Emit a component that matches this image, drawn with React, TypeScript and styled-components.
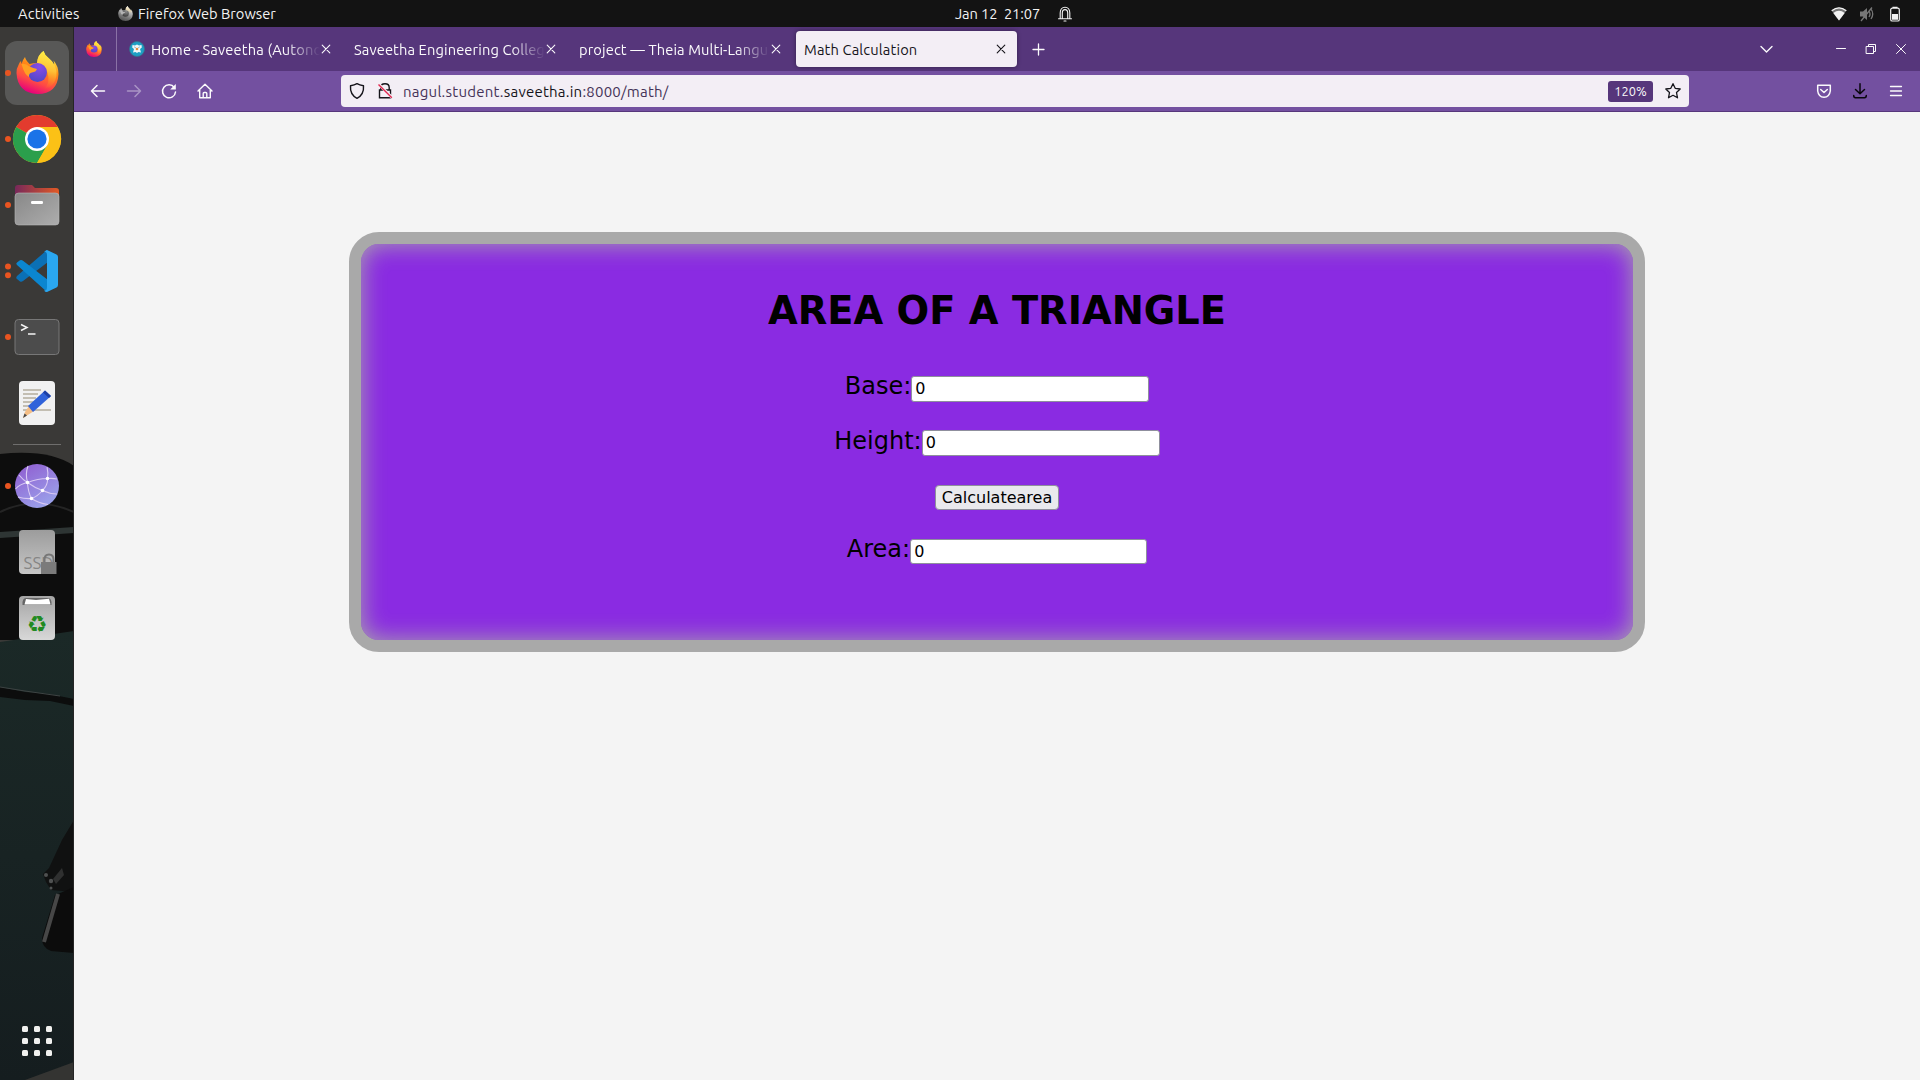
import React from 'react';
import styled, { createGlobalStyle } from 'styled-components';

const Global = createGlobalStyle`
  *, *::before, *::after { box-sizing: border-box; }
  html, body { margin: 0; padding: 0; overflow: hidden; background: #f4f4f4; }
  svg { display: block; flex: none; }
`;

const uiFont = `Ubuntu, "Noto Sans", "Open Sans", sans-serif`;

const Desktop = styled.div`
  width: 1920px;
  height: 1080px;
  display: grid;
  grid-template: 27px 1053px / 74px 1846px;
  font-family: ${uiFont};
  font-size: 14.67px;
  overflow: hidden;
`;

const TopBar = styled.header`
  grid-column: 1 / 3;
  display: grid;
  grid-template-columns: 955px 1fr auto;
  align-items: center;
  background: #131313;
  color: #f2f2f2;
`;

const BarGroup = styled.div<{ $gap?: number; $left?: number; $right?: number }>`
  display: flex;
  align-items: center;
  height: 27px;
  gap: ${(p) => p.$gap ?? 0}px;
  padding-left: ${(p) => p.$left ?? 0}px;
  padding-right: ${(p) => p.$right ?? 0}px;
`;

const Text = styled.span<{ $ls?: number; $w?: number }>`
  white-space: pre;
  line-height: 20px;
  letter-spacing: ${(p) => p.$ls ?? 0}px;
  width: ${(p) => (p.$w ? `${p.$w}px` : 'auto')};
`;

const Dock = styled.nav`
  position: relative;
  display: flex;
  flex-direction: column;
  padding-top: 13px;
  background: #3a3937;
  overflow: hidden;
`;

const Wallpaper = styled.svg`
  position: absolute;
  left: 0;
  top: 0;
`;

const DockItem = styled.div`
  position: relative;
  height: 66px;
  width: 74px;
  flex: none;
`;

const DockRule = styled.hr`
  position: relative;
  flex: none;
  width: 48px;
  height: 1px;
  margin: 8px 13px;
  border: 0;
  background: #6f6e6d;
`;

const AppsGrid = styled.div`
  position: relative;
  display: grid;
  grid-template-columns: repeat(3, 6px);
  gap: 6px;
  margin: auto 0 24px 22px;
`;

const AppsDot = styled.i`
  width: 6px;
  height: 6px;
  border-radius: 1.5px;
  background: #f1f1ef;
`;

const Browser = styled.main`
  display: flex;
  flex-direction: column;
  background: #f4f4f4;
`;

const TabStrip = styled.div`
  display: flex;
  align-items: center;
  height: 44px;
  background: #56367b;
  color: #fbfafc;
`;

const PinnedTab = styled.div`
  width: 43px;
  height: 44px;
  padding: 14px 0 0 12px;
  margin-right: 4px;
  border-right: 1px solid #8a72a6;
`;

const Tab = styled.div<{ $active?: boolean }>`
  display: flex;
  align-items: center;
  width: ${(p) => (p.$active ? 221 : 225)}px;
  height: 36px;
  padding: 0 ${(p) => (p.$active ? 10 : 14)}px 0 8px;
  border-radius: 4px;
  background: ${(p) => (p.$active ? '#f3eef5' : 'transparent')};
  color: ${(p) => (p.$active ? '#15141a' : 'inherit')};
  box-shadow: ${(p) => (p.$active ? '0 0 4px rgba(0,0,0,.4)' : 'none')};
`;

const TabTitle = styled.span<{ $ls: number; $fade?: boolean }>`
  flex: 1;
  min-width: 0;
  white-space: pre;
  line-height: 22px;
  padding-top: 1px;
  letter-spacing: ${(p) => p.$ls}px;
  mask-image: ${(p) => (p.$fade ? 'linear-gradient(to left, transparent, #000 34px)' : 'none')};
`;

const TabIcon = styled.span`
  margin-right: 6px;
`;

const NewTab = styled.div`
  margin-left: 15px;
`;

const WindowControls = styled.div`
  display: flex;
  align-items: center;
  margin-left: auto;
  padding-right: 13px;
`;

const NavBar = styled.div`
  display: flex;
  align-items: center;
  height: 41px;
  padding: 0 14px 0 14px;
  border-bottom: 1px solid #56367b;
  background: #7350a0;
  color: #fbfafc;
`;

const NavButtons = styled.div`
  display: flex;
  gap: 15.7px;
  width: 253px;
`;

const UrlBar = styled.div`
  display: flex;
  align-items: center;
  width: 1348px;
  height: 32px;
  padding: 0 6px;
  border-radius: 4px;
  background: #f3eef5;
  color: #15141a;
`;

const Url = styled.span`
  flex: 1;
  white-space: pre;
  font-size: 15px;
  letter-spacing: 0.23px;
  color: #453358;
  b { font-weight: 400; color: #15141a; }
`;

const ZoomBadge = styled.span`
  width: 45px;
  height: 21px;
  margin-right: 10px;
  border-radius: 3px;
  background: #56367b;
  color: #fbfafc;
  font-size: 12.8px;
  line-height: 21px;
  text-align: center;
`;

const NavRight = styled.div`
  display: flex;
  gap: 16px;
  margin-left: auto;
`;

const Card = styled.section`
  width: 1296px;
  height: 420px;
  margin: 120px 0 0 275px;
  padding-top: 41px;
  border: 12px solid #a9a9a9;
  border-radius: 30px;
  background: #8a2be2;
  box-shadow: inset 0 0 24px #a9a9a9;
  color: #000;
  font-family: "DejaVu Sans", sans-serif;
`;

const Title = styled.h1`
  margin: 0;
  height: 91px;
  text-align: center;
  font-size: 38.4px;
  line-height: 52px;
  white-space: nowrap;
`;

const Row = styled.div<{ $gap: number }>`
  display: flex;
  justify-content: center;
  height: 26px;
  margin-bottom: ${(p) => p.$gap}px;
`;

const Label = styled.label<{ $up?: number }>`
  margin-top: -${(p) => p.$up ?? 3}px;
  font-size: 24px;
  line-height: 26px;
`;

const Field = styled.input<{ $small?: boolean }>`
  width: ${(p) => (p.$small ? 237 : 238)}px;
  height: ${(p) => (p.$small ? 25 : 26)}px;
  padding: 0 3px 1px;
  border: 1px solid #8f8f9d;
  border-radius: 3px;
  background: #fff;
  color: #000;
  font: 16px "DejaVu Sans", sans-serif;
  outline: none;
`;

const Submit = styled.button`
  width: 124px;
  height: 25px;
  padding: 0;
  border: 1px solid #8f8f9d;
  border-radius: 4px;
  background: #e9e9ed;
  color: #000;
  font: 16px/22px "DejaVu Sans", sans-serif;
`;

const Firefox = ({ size, id, gray }: { size: number; id: string; gray?: boolean }) => {
  const c = gray
    ? ['#f4f4f4', '#b5b5b5', '#777', '#555', '#8a8a8a', '#3c3c3c']
    : ['#fff044', '#ff8a16', '#ff4a45', '#e5007d', '#8a4be8', '#5148c8'];
  return (
    <svg width={size} height={size} viewBox="0 0 42 43">
      <defs>
        <linearGradient id={id + 'a'} x1=".75" y1=".1" x2=".4" y2="1">
          <stop offset="0" stopColor={c[0]} />
          <stop offset=".35" stopColor={c[1]} />
          <stop offset=".7" stopColor={c[2]} />
          <stop offset="1" stopColor={c[3]} />
        </linearGradient>
        <linearGradient id={id + 'b'} x1=".5" y1="0" x2=".4" y2="1">
          <stop offset="0" stopColor={c[0]} />
          <stop offset=".5" stopColor="#ffc53a" stopOpacity={gray ? 0 : 0.9} />
          <stop offset="1" stopColor={c[1]} stopOpacity="0" />
        </linearGradient>
        <radialGradient id={id + 'c'} cx=".6" cy=".2" r=".8">
          <stop offset="0" stopColor={c[4]} />
          <stop offset="1" stopColor={c[5]} />
        </radialGradient>
      </defs>
      <path d="M2 14 Q3 11 4.500 10 L5 13 Q6 9 8.500 6 Q9 9 13 13 Q17 12 20.500 12 Q21 4 27 0 Q28 4 32 7 Q36 10 37.500 14 Q38 12 37 9.500 Q42 15 42 23 Q41 43 21 43 Q1 42 0 22 Q0 17 2 14Z" fill={`url(#${id}a)`} />
      <path d="M20.500 12 Q21 4 27 0 Q28 4 32 7 Q41 14 40 25 Q38 36 28 38 Q34 31 31 22 Q29 14 20.500 12Z" fill={`url(#${id}b)`} />
      <circle cx="21" cy="21.500" r="9.500" fill={`url(#${id}c)`} />
      <path d="M5 13 Q9 12 13 15.500 Q17 17 20.500 18 Q19.500 21 15.500 21.500 Q12 22 12.500 26 Q8 24 5 13Z" fill={gray ? c[1] : '#ffa022'} />
    </svg>
  );
};

const Dots = ({ n }: { n: number }) =>
  n === 2 ? (
    <g fill="#e95420"><circle cx="8" cy="28.5" r="3" /><circle cx="8" cy="37.3" r="3" /></g>
  ) : n === 1 ? (
    <circle cx="8" cy="33" r="3" fill="#e95420" />
  ) : null;

const DockIcon = ({ dots = 0, children }: { dots?: number; children: React.ReactNode }) => (
  <DockItem>
    <svg width="74" height="66" viewBox="0 0 74 66">
      <Dots n={dots} />
      {children}
    </svg>
  </DockItem>
);

const Line = ({ w = 16, h = w, d, sw = 1.5, color = 'currentColor', fill = 'none', o = 1 }: {
  w?: number; h?: number; d: string; sw?: number; color?: string; fill?: string; o?: number;
}) => (
  <svg width={w} height={h} viewBox={`0 0 ${w} ${h}`} opacity={o}>
    <path d={d} fill={fill} stroke={color} strokeWidth={sw} strokeLinecap="round" strokeLinejoin="round" />
  </svg>
);

const CloseX = () => <Line w={12} d="M2.2 2.2 9.8 9.8M9.8 2.2 2.2 9.8" sw={1.1} />;

const Scenery = () => (
  <Wallpaper width="74" height="1053" viewBox="0 27 74 1053">
    <defs>
      <linearGradient id="teal" x1="0" y1="0" x2="0" y2="1">
        <stop offset="0" stopColor="#1b2927" />
        <stop offset="1" stopColor="#151d1f" />
      </linearGradient>
    </defs>
    <path d="M0 454Q50 449 74 466V640H0Z" fill="#0d0d0d" />
    <path d="M0 512Q35 495 74 512" fill="none" stroke="#242424" strokeWidth="2" />
    <path d="M0 532 74 527V533L0 538Z" fill="#2e3534" />
    <path d="M0 642 74 631V1080H0Z" fill="url(#teal)" />
    <path d="M0 687 25 692 49 694 74 699V706L50 701 25 700 0 697Z" fill="#0c0d0d" />
    <path d="M0 687 25 691 60 696" stroke="#3d4343" fill="none" />
    <path d="M74 820 62 840 49 868 43 874 46 882 51 890 74 892Z" fill="#101111" />
    <path d="M58 894 74 887V953L51 951Q42 948 42 938L55 895Z" fill="#0c0c0c" />
    <path d="M58 894 44 942" stroke="#474747" strokeWidth="4" />
    <path d="M53 879 62 868 64 875 56 884Z" fill="#2f3030" />
    <g fill="#4f5151"><circle cx="46" cy="875" r="2" /><circle cx="51" cy="881" r="2.2" /><circle cx="51" cy="888" r="1.5" /></g>
    <path d="M25 1080 74 1062V1080Z" fill="#343432" />
    <path d="M73.5 27V1080" stroke="#252525" />
  </Wallpaper>
);

export default function App() {
  return (
    <>
      <Global />
      <Desktop>
        <TopBar>
          <BarGroup $left={18} $gap={5}>
            <Text $w={95} $ls={0.15}>Activities</Text>
            <Firefox size={15} id="top" gray />
            <Text>Firefox Web Browser</Text>
          </BarGroup>
          <BarGroup $gap={16}>
            <Text $w={86} $ls={-0.1}>Jan 12  21:07</Text>
            <Line w={16} h={18} d="M3.2 13.5V8C3.2 4.8 5 2.2 8 2.2S12.8 4.8 12.8 8V13.5M1.5 13.8H14.5M5.3 13V8C5.3 6 6.4 4.6 8 4.6S10.7 6 10.7 8V13M7 16H9" sw={1.1} />
          </BarGroup>
          <BarGroup $gap={12} $right={17}>
            <svg width="16" height="16" viewBox="0 0 16 16">
              <path d="M.5 4.6Q8-1.4 15.5 4.6L8 14.5Z" fill="#777" />
              <path d="M.7 4.7Q8-1 15.3 4.7" fill="none" stroke="#f2f2f2" strokeWidth="1.3" />
              <path d="M2.3 7Q8 2.6 13.7 7L8 14.5Z" fill="#f2f2f2" />
            </svg>
            <svg width="16" height="16" viewBox="0 0 16 16">
              <path d="M1 5.5H4L8 2V14L4 10.5H1Z" fill="#777" />
              <path d="M10 5Q12 8 10 11M12 3Q15.5 8 12 13M2 15 13 1.5" fill="none" stroke="#777" strokeWidth="1.3" />
            </svg>
            <svg width="16" height="16" viewBox="0 0 16 16">
              <rect x="3.7" y="2.2" width="8.6" height="12.8" rx="1.6" fill="none" stroke="#f2f2f2" strokeWidth="1.2" />
              <path d="M5.5.8H10.5V2H5.5ZM5 8H11V13.8H5Z" fill="#f2f2f2" />
            </svg>
          </BarGroup>
        </TopBar>

        <Dock>
          <Scenery />
          <DockIcon>
            <rect x="5" y="1" width="64" height="64" rx="12" fill="#585857" />
            <Dots n={1} />
            <g transform="translate(16 11)"><Firefox size={43} id="dock" /></g>
          </DockIcon>
          <DockIcon dots={1}>
            <circle cx="37" cy="33" r="24" fill="#fbc116" />
            <path d="M37 33 16.2 21A24 24 0 0 1 57.8 21Z" fill="#e33b2e" />
            <path d="M37 33 16.2 21A24 24 0 0 0 37 57L47.4 39Z" fill="#2b9f4c" />
            <path d="M37 21H57.8A24 24 0 0 1 37 57L47.4 39Z" fill="#fbc116" />
            <circle cx="37" cy="33" r="12" fill="#fff" />
            <circle cx="37" cy="33" r="9.6" fill="#1a73e8" />
          </DockIcon>
          <DockIcon dots={1}>
            <defs>
              <linearGradient id="fold"><stop offset="0" stopColor="#77285a" /><stop offset="1" stopColor="#e25a25" /></linearGradient>
              <linearGradient id="foldFront" x1="0" y1="0" x2="1" y2="1"><stop offset="0" stopColor="#888" /><stop offset="1" stopColor="#adadad" /></linearGradient>
            </defs>
            <path d="M15 28V16Q15 13 18 13H32L35 16H56Q59 16 59 19V28Z" fill="url(#fold)" />
            <rect x="15" y="21" width="44" height="32" rx="3.5" fill="url(#foldFront)" stroke="#b9b9b9" strokeWidth=".6" />
            <rect x="31" y="29" width="12" height="3" rx="1.2" fill="#fff" />
          </DockIcon>
          <DockIcon dots={2}>
            <path d="M47 12 17 38Q15.500 40 17 41L20 43.500Q21.500 44.200 23 43L48 24Z" fill="#0b70b5" />
            <path d="M47 54 17 27Q15.500 25.500 17 24.500L20 22.200Q21.500 21.500 23 22.800L48 42Z" fill="#0b86d0" />
            <path d="M47 12 56.500 16.500Q58 17.300 58 19V47Q58 48.700 56.500 49.500L47 54Q45 54 44 52.500Q47 53 47 49V17Q47 13.500 44 13.500Z" fill="#2aa7f0" />
          </DockIcon>
          <DockIcon dots={1}>
            <rect x="15" y="15.500" width="44" height="35" rx="3.500" fill="#4c4c4c" stroke="#777" strokeWidth="1" />
            <path d="M21 20.500 27 23.500 21 26.500M28 30H35.500" fill="none" stroke="#f4f4f4" strokeWidth="1.500" />
          </DockIcon>
          <DockIcon>
            <rect x="19" y="11" width="36" height="44" rx="4" fill="#f1f1f1" />
            <path d="M23 20H41M23 24H38M23 28H36M23 32H34M23 36H31M23 40H51" stroke="#c3beb2" strokeWidth="1.800" />
            <path d="M25 42 29 36 34 41 23 48Z" fill="#f4bd84" />
            <path d="M28 36 45 20.500 51 26 33 42Z" fill="#2f62da" />
            <path d="M45 20.500 51 26 49 28 43 22.500Z" fill="#1c3fa5" />
            <path d="M23 48 24.500 43.500 27 45.500Z" fill="#4a4a4a" />
          </DockIcon>
          <DockRule />
          <DockIcon dots={1}>
            <defs><linearGradient id="globe" x1="0" y1="0" x2=".6" y2="1"><stop offset="0" stopColor="#8f59cf" /><stop offset="1" stopColor="#9aa0ea" /></linearGradient></defs>
            <circle cx="37" cy="33" r="22" fill="url(#globe)" />
            <g fill="none" stroke="#d9c9f3" strokeWidth="1.100">
              <path d="M19 22Q23 27 27.500 29.500Q35 35 42.500 37.500Q50 41 57 41M15.500 36Q20 31 27.500 29.500Q38 25.500 47.500 25.500Q53 25 57 26M27.500 29.500Q25 21 28 13M27.500 29.500Q28 39 31.500 45.500M31.500 45.500Q38 43 42.500 37.500Q48 32 47.500 25.500Q48.500 20 47 14M18 44Q25 46 31.500 45.500Q38 50 48 51.500" />
            </g>
            <g fill="#fff"><circle cx="27.500" cy="29.500" r="1.800" /><circle cx="47.500" cy="25.500" r="1.800" /><circle cx="42.500" cy="37.500" r="1.800" /><circle cx="31.500" cy="45.500" r="1.800" /></g>
          </DockIcon>
          <DockIcon>
            <defs><linearGradient id="ssd" x1="0" y1="0" x2="0" y2="1"><stop offset="0" stopColor="#9c9c9c" /><stop offset="1" stopColor="#c6c6c6" /></linearGradient></defs>
            <rect x="19" y="11" width="36" height="44" rx="4" fill="url(#ssd)" />
            <text x="23.500" y="50" fontSize="17" fill="#858585" fontFamily={uiFont}>SSD</text>
            <path d="M44.500 45V40.500Q44.500 35.500 49 35.500T53.500 40.500V45" fill="none" stroke="#777" strokeWidth="2" />
            <rect x="41" y="43" width="15.500" height="12" fill="#7b7b7b" />
          </DockIcon>
          <DockIcon>
            <defs><linearGradient id="bin" x1="0" y1="0" x2="0" y2="1"><stop offset="0" stopColor="#a5a5a5" /><stop offset="1" stopColor="#d8d8d8" /></linearGradient></defs>
            <rect x="19" y="11" width="36" height="44" rx="4" fill="url(#bin)" />
            <path d="M22.500 20Q22 13 26 13H48Q52 13 51.500 20Z" fill="#666" />
            <path d="M24.500 19.500 26 14 36 15 49 13.800 50.500 19.500Z" fill="#fff" />
            <text x="37" y="47" fontSize="23" textAnchor="middle" fill="#218a21" fontFamily='"DejaVu Sans", sans-serif'>♻</text>
          </DockIcon>
          <AppsGrid>
            {Array.from({ length: 9 }, (_, i) => <AppsDot key={i} />)}
          </AppsGrid>
        </Dock>

        <Browser>
          <TabStrip>
            <PinnedTab><Firefox size={16} id="pin" /></PinnedTab>
            <Tab>
              <TabIcon>
                <svg width="16" height="16" viewBox="0 0 16 16">
                  <circle cx="8" cy="8" r="7.500" fill="#1d9fc4" stroke="#37718c" strokeWidth=".8" />
                  <path d="M3.500 4 6 4.500 8 3.500 10 4.500 12.500 4 12.800 6.500 11 8 12 11.500 9.500 11 8 12 6.500 11 4 11.500 5 8 3.200 6.500Z" fill="#f1f6f7" />
                  <circle cx="8" cy="8" r="1.300" fill="#e28a3c" />
                  <path d="M5.500 6 6.500 6.600M10.500 6 9.500 6.600" stroke="#3b89ac" />
                </svg>
              </TabIcon>
              <TabTitle $ls={0.15} $fade>Home - Saveetha (Autono</TabTitle>
              <CloseX />
            </Tab>
            <Tab>
              <TabTitle $ls={0.12} $fade>Saveetha Engineering Colleg</TabTitle>
              <CloseX />
            </Tab>
            <Tab>
              <TabTitle $ls={0.12} $fade>project — Theia Multi-Langu</TabTitle>
              <CloseX />
            </Tab>
            <Tab $active>
              <TabTitle $ls={0.15}>Math Calculation</TabTitle>
              <CloseX />
            </Tab>
            <NewTab><Line w={13} d="M6.500 1V12M1 6.500H12" sw={1.300} /></NewTab>
            <WindowControls>
              <Line w={76} h={14} d="M2 4.500 7.500 10 13 4.500" sw={1.400} />
              <Line w={30} h={14} d="M1.500 6.500H10.500" sw={1} />
              <Line w={30} h={14} d="M1.500 4.500H8.500V11.500H1.500ZM3.500 4.500V2.500H10.500V9.500H8.500" sw={1} />
              <Line w={12} h={14} d="M1.500 2.500 10.500 11.500M10.500 2.500 1.500 11.500" sw={1} />
            </WindowControls>
          </TabStrip>

          <NavBar>
            <NavButtons>
              <Line w={20} d="M3.500 10H16.500M9 4.500 3.500 10 9 15.500" />
              <Line w={20} d="M3.500 10H16.500M11 4.500 16.500 10 11 15.500" o={0.4} />
              <svg width="20" height="20" viewBox="0 0 20 20">
                <path d="M15.300 6.500A6.500 6.500 0 1 0 16.500 11" fill="none" stroke="currentColor" strokeWidth="1.500" strokeLinecap="round" />
                <path d="M16.800 3V8.500H11.200Z" fill="currentColor" />
              </svg>
              <Line w={20} d="M3 10 10 3.200 17 10M4.700 9V16.800H15.300V9M8.200 16.500V12.500Q8.200 11.500 9.200 11.500H10.800Q11.800 11.500 11.800 12.500V16.500" sw={1.400} />
            </NavButtons>
            <UrlBar>
              <Line w={20} d="M10 2.700Q12.500 4.300 16.500 4.700Q17.200 13.500 10 17.300Q2.800 13.500 3.500 4.700Q7.500 4.300 10 2.700Z" sw={1.400} />
              <span>
                <svg width="36" height="20" viewBox="-8 0 36 20">
                  <path d="M5.800 9V6.500Q5.800 2.800 10 2.800T14.200 6.500V9M4.500 9H15.500V16.800H4.500Z" fill="none" stroke="#15141a" strokeWidth="1.400" />
                  <path d="M3.800 3.300 17 16.500" stroke="#f3eef5" strokeWidth="3" />
                  <path d="M3.500 3.500 16.800 16.800" stroke="#e22850" strokeWidth="1.400" />
                </svg>
              </span>
              <Url>nagul.student.<b>saveetha.in</b>:8000/math/</Url>
              <ZoomBadge>120%</ZoomBadge>
              <Line w={20} d="M10 2.700 12.200 7.300 17.200 8 13.500 11.500 14.500 16.800 10 14.300 5.500 16.800 6.500 11.500 2.800 8 7.800 7.300Z" sw={1.300} />
            </UrlBar>
            <NavRight>
              <Line w={20} d="M3.700 4.300H16.300V10Q15.500 16 10 16.300Q4.500 16 3.700 10ZM6.700 8.500 10 11.500 13.300 8.500" />
              <Line w={20} d="M10 2.800V12.500M5.500 8.500 10 12.700 14.500 8.500M3.700 14.500Q3.700 16.700 5.500 16.700H14.500Q16.300 16.700 16.300 14.500" color="#08060c" />
              <Line w={20} d="M4.500 5.500H15.500M4.500 10H15.500M4.500 14.500H15.500" sw={1.300} />
            </NavRight>
          </NavBar>

          <Card>
            <Title>AREA OF A TRIANGLE</Title>
            <Row $gap={28}><Label>Base:</Label><Field defaultValue="0" /></Row>
            <Row $gap={29}><Label $up={2}>Height:</Label><Field defaultValue="0" /></Row>
            <Row $gap={28}><Submit>Calculatearea</Submit></Row>
            <Row $gap={0}><Label>Area:</Label><Field $small defaultValue="0" /></Row>
          </Card>
        </Browser>
      </Desktop>
    </>
  );
}
